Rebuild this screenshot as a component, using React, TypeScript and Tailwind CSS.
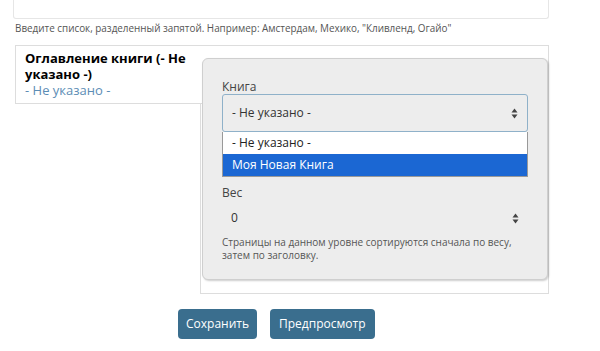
import React from "react";

function Arrows() {
  return (
    <svg width="7" height="11" viewBox="0 0 7 11" className="block">
      <path d="M3.5 0.5 L6.5 4.5 L0.5 4.5 Z" fill="#444" />
      <path d="M3.5 10.5 L6.5 6.5 L0.5 6.5 Z" fill="#444" />
    </svg>
  );
}

export default function App() {
  return (
    <div
      className="relative w-[600px] h-[351px] overflow-hidden bg-white text-[#333]"
      style={{ fontFamily: '"Open Sans", "Noto Sans", sans-serif' }}
    >
      <div className="ml-[13px] w-[536px] h-[19px] border border-t-0 border-[#e6e6e6] rounded-b-[3px]" />
      <div className="ml-[15px] mt-[3px] text-[9.9px] leading-[13px] text-[#555]">
        Введите список, разделенный запятой. Например: Амстердам, Мехико, "Кливленд, Огайо"
      </div>
      <div className="ml-[15px] mt-[10px] w-[534px]">
        <div className="h-[59px] border border-[#ddd] pl-[9px] pt-[4px]">
          <div className="w-[170px] text-[13px] leading-[16px] font-bold text-black">
            Оглавление книги (- Не указано -)
          </div>
          <div className="text-[13px] leading-[16px] text-[#5c8db5]">- Не указано -</div>
        </div>
        <div className="ml-[185px] h-[190px] border border-t-0 border-[#ddd]" />
      </div>
      <div className="ml-[178px] mt-[15px] flex gap-[13px]">
        <button className="h-[30px] px-[8px] rounded-[4px] bg-[#3a6e8e] text-white text-[12px]">
          Сохранить
        </button>
        <button className="h-[30px] px-[9px] rounded-[4px] bg-[#3a6e8e] text-white text-[12px]">
          Предпросмотр
        </button>
      </div>

      <div className="absolute left-[202px] top-[58px] w-[346px] h-[222px] rounded-[6px] border border-[#cfcfcf] bg-[#ededed] shadow-[1px_1px_2px_rgba(0,0,0,0.2)] px-[19px] pt-[21px]">
        <div className="text-[12px] leading-[14px] text-[#444]">Книга</div>
        <div className="h-[38px] border border-[#8fb1c9] rounded-[3px] flex items-center justify-between pl-[9px] pr-[9px] text-[12px]">
          <span>- Не указано -</span>
          <Arrows />
        </div>
        <div className="border border-[#999] border-t-0 bg-white text-[12px]">
          <div className="h-[22px] flex items-center pl-[9px] text-[#222]">- Не указано -</div>
          <div className="h-[22px] flex items-center pl-[9px] bg-[#1b67d3] text-white">Моя Новая Книга</div>
        </div>
        <div className="mt-[9px] text-[12px] leading-[14px] text-[#444]">Вес</div>
        <div className="mt-[5px] h-[26px] flex items-center justify-between pl-[9px] pr-[9px] text-[12px]">
          <span>0</span>
          <Arrows />
        </div>
        <div className="mt-[5px] text-[10px] leading-[13px] text-[#555]">
          Страницы на данном уровне сортируются сначала по весу,
          <br />
          затем по заголовку.
        </div>
      </div>
    </div>
  );
}
